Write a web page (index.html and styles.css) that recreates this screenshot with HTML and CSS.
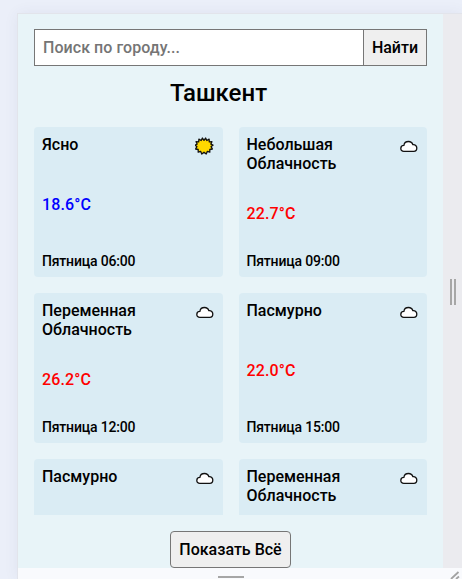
FILE: index.html
```html
<!DOCTYPE html>
<html lang="ru">
<head>
<meta charset="utf-8">
<title>Погода</title>
<link rel="stylesheet" href="styles.css">
</head>
<body>
<svg class="defs" width="0" height="0" aria-hidden="true">
  <symbol id="cloud" viewBox="0 0 20 22">
    <path d="M4.8 16.4C3 16.4 1.8 15.1 1.8 13.4C1.8 11.6 3.1 10.4 4.9 10.4C5.2 8.1 7.1 6.5 9.5 6.5C11.7 6.5 13.3 7.8 13.9 9.7C16.2 9.4 17.8 11 17.8 13.1C17.8 15 16.5 16.4 14.8 16.4Z" fill="#fff" stroke="#111" stroke-width="1.3" stroke-linejoin="round"/>
  </symbol>
  <symbol id="sun" viewBox="0 0 20 22">
    <path fill="#ffd900" stroke="#111" stroke-width="1.3" stroke-linejoin="round" d="M9 5.4L10.6 3L11.8 5.5L14.1 4.1L14.3 6.9L16.9 6.7L15.9 9.1L18 10.2L16.1 11.6L17.4 14L14.8 14.5L14.8 17.2L12.4 16.3L11.2 19L9 17.2L6.8 19L5.6 16.3L3.2 17.2L3.2 14.5L0.6 14L1.9 11.6L0 10.2L2.1 9.1L1.1 6.7L3.7 6.9L3.9 4.1L6.2 5.5L7.4 3Z"/>
  </symbol>
</svg>
<div class="viewport">
  <main class="weather">
    <form class="search">
      <input class="search-input" type="text" placeholder="Поиск по городу...">
      <button class="search-button" type="button">Найти</button>
    </form>
    <h1 class="city">Ташкент</h1>
    <section class="cards">
      <article class="card">
        <div class="card-head"><span>Ясно</span><svg class="icon"><use href="#sun"/></svg></div>
        <div class="temp cold">18.6°C</div>
        <div class="time">Пятница 06:00</div>
      </article>
      <article class="card">
        <div class="card-head"><span>Небольшая Облачность</span><svg class="icon"><use href="#cloud"/></svg></div>
        <div class="temp">22.7°C</div>
        <div class="time">Пятница 09:00</div>
      </article>
      <article class="card">
        <div class="card-head"><span>Переменная Облачность</span><svg class="icon"><use href="#cloud"/></svg></div>
        <div class="temp">26.2°C</div>
        <div class="time">Пятница 12:00</div>
      </article>
      <article class="card">
        <div class="card-head"><span>Пасмурно</span><svg class="icon"><use href="#cloud"/></svg></div>
        <div class="temp">22.0°C</div>
        <div class="time">Пятница 15:00</div>
      </article>
      <article class="card">
        <div class="card-head"><span>Пасмурно</span><svg class="icon"><use href="#cloud"/></svg></div>
      </article>
      <article class="card">
        <div class="card-head"><span>Переменная Облачность</span><svg class="icon"><use href="#cloud"/></svg></div>
      </article>
    </section>
    <button class="show-all" type="button">Показать Всё</button>
  </main>
  <div class="handle-right"><i class="grip"></i><i class="grip"></i></div>
  <div class="handle-bottom"><i class="grip-h"></i></div>
  <div class="handle-corner"><svg width="19" height="11" viewBox="0 0 19 11"><path d="M8 11L15.5 4M13 11L16 8.5" stroke="#a3a3a3" stroke-width="1.8" fill="none"/></svg></div>
</div>
</body>
</html>
```
FILE: styles.css
```css
* {
  box-sizing: border-box;
}

body {
  margin: 0;
  height: 579px;
  padding: 14px 0 0 18px;
  overflow: hidden;
  background: #ebeff9;
  font: 500 16px/19px Roboto, sans-serif;
  color: #000;
}

.defs {
  position: absolute;
}

.viewport {
  display: grid;
  grid-template-columns: 425px 19px;
  grid-template-rows: 554px 11px;
  box-shadow: 0 0 0 1px #e2e4eb, 0 0 14px rgba(70, 70, 110, 0.08);
}

.weather {
  display: flex;
  flex-direction: column;
  align-items: center;
  padding: 15px 16px 0;
  background: #e8f4f8;
}

.search {
  display: flex;
  width: 393px;
  height: 37px;
}

.search-input {
  flex: 1;
  min-width: 0;
  padding: 0 8px;
  border: 1px solid #767676;
  border-right: 0;
  background: #fff;
  font: inherit;
  letter-spacing: 0.05px;
}

.search-input::placeholder {
  color: #757575;
}

.search-button {
  width: 64px;
  padding: 0;
  border: 1px solid #767676;
  background: #efefef;
  color: #000;
  font: inherit;
}

.city {
  margin: 13px 0 20px;
  padding-right: 24px;
  font-size: 24px;
  font-weight: 500;
  line-height: 28px;
}

.cards {
  display: grid;
  grid-template-columns: 1fr 1fr;
  grid-auto-rows: 150px;
  gap: 16px;
  width: 393px;
  height: 388px;
  overflow: hidden;
}

.card {
  display: flex;
  flex-direction: column;
  justify-content: space-between;
  padding: 8px;
  border-radius: 4px;
  background: #daecf4;
}

.card-head {
  display: flex;
  justify-content: space-between;
  gap: 20px;
}

.icon {
  flex: none;
  width: 20px;
  height: 22px;
  margin-bottom: -2px;
}

.temp {
  color: #f00;
  letter-spacing: 0.12px;
}

.cold {
  color: #00f;
}

.time {
  font-size: 14px;
  line-height: 16px;
  letter-spacing: -0.18px;
}

.show-all {
  width: 121px;
  height: 37px;
  flex: none;
  margin: 16px 0 0;
  padding: 0;
  border: 1px solid #767676;
  border-radius: 4px;
  background: #efefef;
  color: #000;
  font: inherit;
}

.handle-right {
  display: flex;
  align-items: center;
  justify-content: center;
  gap: 2px;
  height: 555px;
  background: #ebebef;
}

.grip {
  width: 2px;
  height: 26px;
  background: #a6a6a6;
}

.handle-bottom {
  display: flex;
  justify-content: center;
  padding-top: 8px;
  background: #f9fafd;
}

.grip-h {
  width: 26px;
  height: 2px;
  background: #a6a6a6;
}

.handle-corner {
  height: 11px;
  background: #f9fafd;
}

.handle-corner svg {
  display: block;
}
```
